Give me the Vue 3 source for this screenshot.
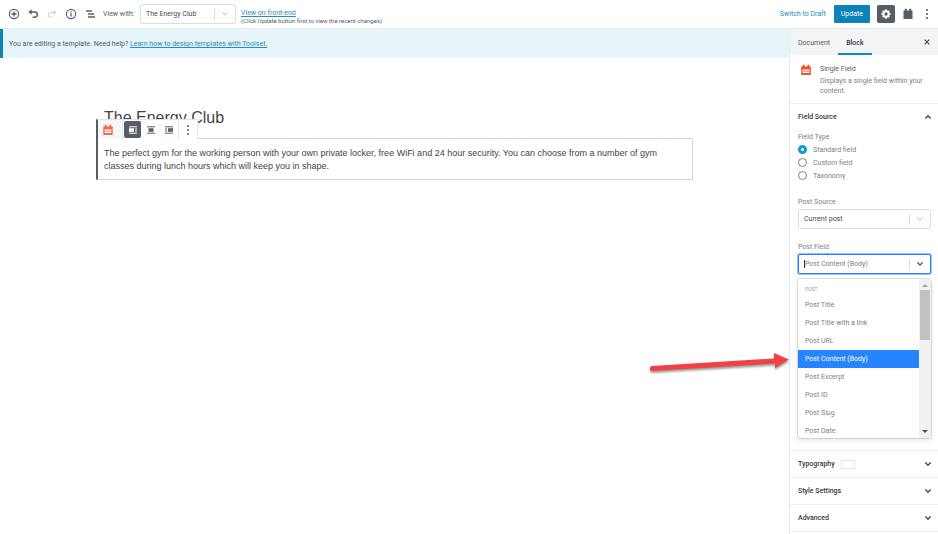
<script setup>
import { ref } from 'vue'

const template = ref('The Energy Club')
const tab = ref('Block')
const fieldType = ref('Standard field')
const postSource = ref('Current post')
const postField = ref('Post Content (Body)')
const fieldTypes = ['Standard field', 'Custom field', 'Taxonomy']
const postFields = [
  'Post Title',
  'Post Title with a link',
  'Post URL',
  'Post Content (Body)',
  'Post Excerpt',
  'Post ID',
  'Post Slug',
  'Post Date',
]
</script>

<template>
  <div class="editor">
    <header class="topbar">
      <div class="tools">
        <button class="icon" aria-label="Add block">
          <svg width="12" height="12" viewBox="0 0 12 12"><circle cx="6" cy="6" r="4.6" fill="none" stroke="#555d66" stroke-width="1.1" /><path d="M6 3.4v5.2M3.4 6h5.2" stroke="#555d66" stroke-width="1.3" /></svg>
        </button>
        <button class="icon" aria-label="Undo">
          <svg width="12" height="12" viewBox="0 0 12 12"><path d="M4.6 1.2 1.4 4l3.2 2.8z" fill="#555d66" /><path d="M3.5 4h4.2a2.6 2.6 0 0 1 0 5.2H5.6" fill="none" stroke="#555d66" stroke-width="1.4" /></svg>
        </button>
        <button class="icon" aria-label="Redo" disabled>
          <svg width="12" height="12" viewBox="0 0 12 12"><path d="M7.4 1.6 10.6 4.4 7.4 7.2z" fill="#d5d8da" /><path d="M8.5 4.4H4.8a2.4 2.4 0 0 0 0 4.8h1.8" fill="none" stroke="#d5d8da" stroke-width="1.2" /></svg>
        </button>
        <button class="icon" aria-label="Content information">
          <svg width="12" height="12" viewBox="0 0 12 12"><circle cx="6" cy="6" r="4.6" fill="none" stroke="#555d66" stroke-width="1.1" /><path d="M6 5.3v3.3M6 3.3v1.2" stroke="#555d66" stroke-width="1.3" /></svg>
        </button>
        <button class="icon" aria-label="Block navigation">
          <svg width="12" height="12" viewBox="0 0 12 12"><path d="M2 3h6M4 6h6M4 9h7" stroke="#555d66" stroke-width="1.3" /></svg>
        </button>
      </div>
      <label class="view-label" for="view-with">View with:</label>
      <div class="picker view-picker">
        <select id="view-with" v-model="template"><option>The Energy Club</option></select>
        <span class="divider"></span>
        <svg class="chev" width="8" height="6" viewBox="0 0 8 6"><path d="m1.4 1.5 2.6 2.6 2.6-2.6" /></svg>
      </div>
      <div class="front">
        <a href="#front">View on front-end</a>
        <small>(Click Update button first to view the recent changes)</small>
      </div>
      <div class="actions">
        <button class="draft">Switch to Draft</button>
        <button class="update">Update</button>
        <button class="settings" aria-label="Settings">
          <svg width="12" height="12" viewBox="0 0 12 12"><circle cx="6" cy="6" r="2.7" fill="none" stroke="#fff" stroke-width="2" /><path d="M6 1.3v2M6 8.7v2M1.3 6h2M8.7 6h2M2.7 2.7l1.3 1.3M8 8l1.3 1.3M2.7 9.3 4 8M8 4l1.3-1.3" stroke="#fff" stroke-width="1.6" /></svg>
        </button>
        <button class="icon toolset" aria-label="Toolset">
          <svg width="10" height="12" viewBox="0 0 10 12"><path d="M.5 2.6h1.3V.8h2v1.8h2.4V.8h2v1.8h1.3v8.4H.5z" fill="#555d66" /></svg>
        </button>
        <button class="icon more" aria-label="More options">
          <svg width="4" height="12" viewBox="0 0 4 12"><g fill="#555d66"><circle cx="2" cy="2" r="1.1" /><circle cx="2" cy="6" r="1.1" /><circle cx="2" cy="10" r="1.1" /></g></svg>
        </button>
      </div>
    </header>

    <div class="body">
      <main class="canvas">
        <p class="notice">You are editing a template. Need help? <a href="#learn">Learn how to design templates with Toolset.</a></p>
        <article class="post">
          <h1>The Energy Club</h1>
          <section class="block">
            <div class="toolbar" role="toolbar" aria-label="Block tools">
              <div class="group type-group">
                <button class="icon" aria-label="Single Field">
                  <svg width="10" height="12" viewBox="0 0 10 12"><path d="M.3 2.6h1.5V.8h1.8v1.8h2.8V.8h1.8v1.8h1.5v8.4H.3z" fill="#f26a45" /><path d="M1.7 5.4h6.6v3.6H1.7z" fill="#fff" /><path d="M2.5 6.4h1v1.6h-1zM4.5 6.4h1v1.6h-1zM6.500 6.400h1v1.600h-1z" fill="#f26a45" /></svg>
                </button>
              </div>
              <div class="group align-group">
                <button class="align active" aria-label="Align left">
                  <svg width="10" height="8" viewBox="0 0 10 8"><path d="M1 .8h8M1 7.2h8M7 3h2M7 5h2" stroke="#fff" /><path d="M1 2.2h5v3.6H1z" fill="#fff" /></svg>
                </button>
                <button class="align" aria-label="Align center">
                  <svg width="10" height="8" viewBox="0 0 10 8"><path d="M1 .8h8M1 7.2h8" stroke="#555d66" /><path d="M2.5 2.2h5v3.6h-5z" fill="#555d66" /></svg>
                </button>
                <button class="align" aria-label="Align right">
                  <svg width="10" height="8" viewBox="0 0 10 8"><path d="M1 .8h8M1 7.2h8M1 3h2M1 5h2" stroke="#555d66" /><path d="M4 2.2h5v3.6H4z" fill="#555d66" /></svg>
                </button>
              </div>
              <div class="group more-group">
                <button class="icon" aria-label="Block options">
                  <svg width="4" height="12" viewBox="0 0 4 12"><g fill="#555d66"><circle cx="2" cy="2" r="1" /><circle cx="2" cy="6" r="1" /><circle cx="2" cy="10" r="1" /></g></svg>
                </button>
              </div>
            </div>
            <p>The perfect gym for the working person with your own private locker, free WiFi and 24 hour security. You can choose from a number of gym classes during lunch hours which will keep you in shape.</p>
          </section>
        </article>
      </main>

      <aside class="sidebar">
        <nav class="tabs">
          <button v-for="t in ['Document', 'Block']" :key="t" class="tab" :class="{ on: tab === t }" @click="tab = t">{{ t }}</button>
          <button class="icon close" aria-label="Close settings">
            <svg width="8" height="8" viewBox="0 0 8 8"><path d="m1.7 1.7 4.6 4.6M6.3 1.7 1.7 6.3" stroke="#444b52" stroke-width="1.2" /></svg>
          </button>
        </nav>

        <section class="card">
          <svg width="12" height="12" viewBox="0 0 12 12"><path d="M1.2 2.6h1.500V.8h1.800v1.800h3V.8h1.800v1.800h1.500v8.400H1.200z" fill="#f04e23" /><path d="M2.600 5.400h6.800v3.600H2.600z" fill="#fff" /><path d="M3.400 6.400h1.100v1.600H3.400zM5.450 6.400h1.100v1.600h-1.100zM7.500 6.400h1.100v1.600H7.500z" fill="#f04e23" /></svg>
          <div>
            <h2>Single Field</h2>
            <p>Displays a single field within your content.</p>
          </div>
        </section>

        <section class="panel source">
          <button class="panel-head" aria-expanded="true">
            Field Source
            <svg class="caret" width="8" height="6" viewBox="0 0 8 6"><path d="M1.3 4.4 4 1.7l2.7 2.7" /></svg>
          </button>
          <fieldset>
            <legend>Field Type</legend>
            <label v-for="t in fieldTypes" :key="t" class="radio">
              <input v-model="fieldType" type="radio" name="field-type" :value="t">{{ t }}
            </label>
          </fieldset>
          <div class="field">
            <label for="post-source">Post Source</label>
            <div class="picker">
              <select id="post-source" v-model="postSource"><option>Current post</option></select>
              <span class="divider"></span>
              <svg class="chev" width="8" height="6" viewBox="0 0 8 6"><path d="m1.4 1.5 2.6 2.6 2.6-2.6" /></svg>
            </div>
          </div>
          <div class="field">
            <label for="post-field">Post Field</label>
            <div class="picker focused">
              <span class="cursor"></span>
              <input id="post-field" v-model="postField" type="text" role="combobox" aria-expanded="true" aria-controls="post-field-menu">
              <span class="divider"></span>
              <svg class="chev" width="8" height="6" viewBox="0 0 8 6"><path d="m1.4 1.5 2.6 2.6 2.6-2.6" /></svg>
            </div>
            <div class="menu">
              <ul id="post-field-menu" role="listbox" aria-label="Post Field">
                <li class="heading" role="presentation">POST</li>
                <li v-for="f in postFields" :key="f" class="option" role="option" :class="{ chosen: f === postField }" :aria-selected="f === postField" @click="postField = f">{{ f }}</li>
              </ul>
              <div class="scrollbar">
                <svg width="6" height="4" viewBox="0 0 6 4"><path d="M0 4 3 1l3 3z" fill="#a0a0a0" /></svg>
                <span class="thumb"></span>
                <svg width="6" height="4" viewBox="0 0 6 4"><path d="m0 0 3 3 3-3z" fill="#505050" /></svg>
              </div>
            </div>
          </div>
        </section>

        <section class="panel">
          <button class="panel-head">
            <span>Typography</span><span class="swatch"></span>
            <svg class="caret" width="8" height="6" viewBox="0 0 8 6"><path d="m1.3 1.6 2.7 2.7 2.7-2.7" /></svg>
          </button>
        </section>
        <section v-for="p in ['Style Settings', 'Advanced']" :key="p" class="panel">
          <button class="panel-head">
            {{ p }}
            <svg class="caret" width="8" height="6" viewBox="0 0 8 6"><path d="m1.3 1.6 2.7 2.7 2.7-2.7" /></svg>
          </button>
        </section>
      </aside>
    </div>

    <svg class="pointer" width="146" height="26" viewBox="0 0 146 26" aria-hidden="true">
      <path d="M5 15 127 7.500V2l15 6.500-14 8.500v-4.500L5.500 20a2.500 2.500 0 0 1-.5-5z" fill="#f43f43" />
    </svg>
  </div>
</template>

<style>
body {
  margin: 0;
  background: #fff;
}
</style>

<style scoped>
.editor {
  position: relative;
  display: flex;
  flex-direction: column;
  min-height: 100vh;
  overflow: hidden;
  color: #555d66;
  font-family: Roboto, "Open Sans", sans-serif;
  font-size: 7px;
  line-height: 10px;
}
.editor * {
  box-sizing: border-box;
}
h1, h2, p, ul, fieldset {
  margin: 0;
  padding: 0;
  border: 0;
}
button, input, select {
  margin: 0;
  padding: 0;
  border: 0;
  background: none;
  color: inherit;
  font: inherit;
}
a {
  color: #2a8ac0;
}
.icon, .settings, .align {
  display: flex;
  align-items: center;
  justify-content: center;
}
.topbar {
  display: flex;
  align-items: center;
  height: 29px;
  padding: 0 8px;
  border-bottom: 1px solid #e8ebed;
}
.tools {
  display: flex;
  gap: 7px;
}
.view-label {
  width: 31px;
  margin: 0 6px 0 7px;
  white-space: nowrap;
}
.picker {
  display: flex;
  align-items: center;
  height: 20px;
  padding: 0 6px 0 5px;
  border: 1px solid #dcdfe1;
  border-radius: 2px;
  background: #fff;
  color: #444b52;
}
.picker select, .picker input {
  flex: 1;
  min-width: 0;
  appearance: none;
  outline: none;
}
.view-picker {
  width: 96px;
}
.divider {
  width: 1px;
  height: 11px;
  margin-right: 6px;
  background: #d8dbdd;
}
.chev, .caret {
  fill: none;
  stroke: #b8bcc0;
}
.front {
  display: flex;
  flex-direction: column;
  margin-left: 5px;
  padding-top: 5px;
  line-height: 8px;
}
.front small {
  font-size: 6px;
}
.actions {
  display: flex;
  align-items: center;
  margin-left: auto;
}
.draft {
  color: #2a8ac0;
}
.update {
  height: 18px;
  margin: 0 7px 0 8px;
  padding: 0 7px;
  border-radius: 1px;
  background: #0b83b8;
  color: #fff;
}
.settings {
  width: 18px;
  height: 18px;
  border-radius: 2px;
  background: #555d66;
}
.toolset {
  margin: 0 12px 0 8px;
}
.more {
  margin-right: 1px;
}
.body {
  display: flex;
  flex: 1;
}
.canvas {
  flex: 1;
  min-width: 0;
}
.notice {
  padding: 10px 6px 9px;
  border-left: 3px solid #0b86b5;
  background: #e5f5fa;
}
.post {
  max-width: 597px;
  margin: 51px auto 0;
  color: #444;
  font-family: "Liberation Sans", Arial, sans-serif;
}
h1 {
  padding-left: 8px;
  font-size: 16px;
  font-weight: 400;
  line-height: 18px;
}
.block {
  position: relative;
  margin-top: 11px;
  padding: 8px 6px 6px;
  border: 1px solid #d2d5d8;
  border-left: 2px solid #555d66;
  font-size: 9px;
  line-height: 13px;
}
.toolbar {
  position: absolute;
  bottom: 100%;
  left: -2px;
  display: flex;
  height: 20px;
  border-top: 1px solid #e2e4e7;
  border-left: 2px solid #555d66;
  background: #fff;
}
.group {
  display: flex;
  align-items: center;
  border-right: 1px solid #e2e4e7;
}
.type-group {
  padding: 0 9px 0 5px;
  background: #f6f7f8;
}
.align-group {
  gap: 1px;
  padding: 0 1px;
}
.align {
  width: 17px;
  height: 17px;
  border-radius: 2px;
}
.align.active {
  background: #555d66;
}
.more-group {
  padding: 0 7px;
}
.sidebar {
  width: 149px;
  border-left: 1px solid #e8ebed;
}
.tabs {
  display: flex;
  height: 26px;
  padding: 0 7px 0 0;
  background: #f3f4f5;
}
.tab {
  padding: 3px 8px 0;
  border-bottom: 2px solid transparent;
}
.tab.on {
  border-color: #118ac6;
  color: #333a40;
  font-weight: 500;
}
.close {
  margin-left: auto;
}
.card {
  display: flex;
  gap: 8px;
  padding: 9px 7px 7px 10px;
  border-bottom: 1px solid #eceeef;
}
.card svg {
  flex: none;
}
.card h2 {
  margin-bottom: 2px;
  font-size: 7px;
  font-weight: 400;
}
.card p {
  color: #7b8187;
}
.panel {
  padding: 0 7px 0 8px;
  border-bottom: 1px solid #eceeef;
}
.panel-head {
  display: flex;
  align-items: center;
  width: 100%;
  height: 26px;
  padding: 0;
  color: #333a40;
  font-weight: 500;
  text-align: left;
}
.caret {
  margin: 0 -1px 0 auto;
  stroke: #444b52;
  stroke-width: 1.4;
}
.source {
  padding-bottom: 176px;
  color: #7b8187;
}
legend {
  padding: 0;
  margin-bottom: 1px;
}
fieldset {
  margin: 2px 0 15px;
}
.radio {
  display: flex;
  align-items: center;
  gap: 6px;
  height: 13px;
}
.radio input {
  width: 9px;
  height: 9px;
  appearance: none;
  border: 1px solid #7b8187;
  border-radius: 50%;
}
.radio input:checked {
  border: 3px solid #0f9bd0;
}
.field {
  position: relative;
}
.field + .field {
  margin-top: 13px;
}
.field > label {
  display: block;
  margin-bottom: 2px;
}
.focused {
  border-color: #2684ff;
  box-shadow: 0 0 0 1px #2684ff80;
  color: #7b8187;
}
.cursor {
  width: 1px;
  height: 8px;
  background: #333;
}
.focused .chev {
  stroke: #555d66;
  stroke-width: 1.4;
}
.menu {
  position: absolute;
  top: 100%;
  right: 0;
  left: 0;
  display: flex;
  height: 159px;
  margin-top: 5px;
  border-radius: 2px;
  background: #fff;
  box-shadow: 0 0 0 1px #0000001a, 0 2px 5px #0000001f;
}
.menu ul {
  flex: 1;
  overflow: hidden;
  list-style: none;
}
.heading {
  padding: 5px 7px 2px;
  color: #999;
  font-size: 5px;
}
.option {
  height: 18px;
  padding: 4px 7px;
}
.option.chosen {
  background: #2684ff;
  color: #fff;
}
.scrollbar {
  display: flex;
  flex-direction: column;
  align-items: center;
  width: 12px;
  padding: 4px 1px;
  background: #f1f1f1;
}
.thumb {
  width: 100%;
  height: 50px;
  margin: 3px 0 auto;
  background: #c1c1c1;
}
.swatch {
  width: 14px;
  height: 9px;
  margin-left: 6px;
  border: 1px solid #e2e4e7;
}
.pointer {
  position: absolute;
  top: 351px;
  right: 145px;
  filter: drop-shadow(0 2px 1px #00000066);
}
</style>
